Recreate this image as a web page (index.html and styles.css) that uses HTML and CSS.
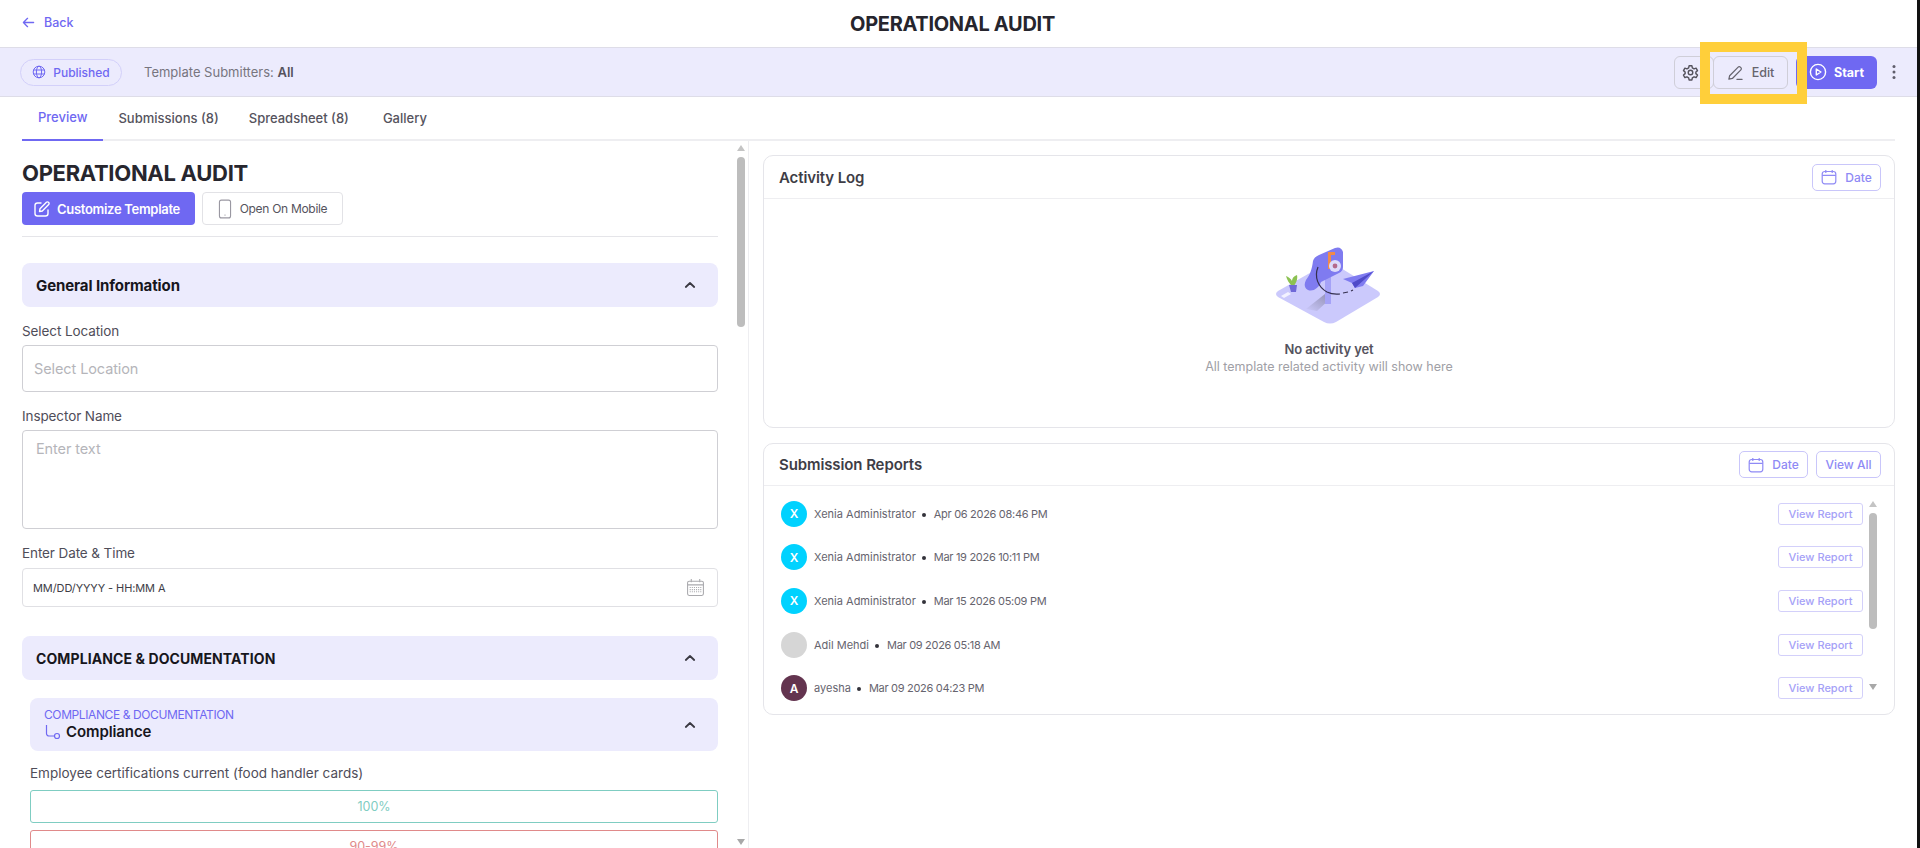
FILE: index.html
```html
<!DOCTYPE html>
<html lang="en">
<head>
  <meta charset="UTF-8">
  <title>Operational Audit</title>
  <link rel="stylesheet" href="styles.css">
</head>
<body>

<div class="page">
  <header class="topbar">
    <a class="back">
      <svg class="ico-back" viewBox="0 0 14 14" fill="none" stroke="currentColor" stroke-width="1.4" stroke-linecap="round" stroke-linejoin="round"><path d="M12.5 7H1.5M6 2.5 1.5 7 6 11.5"/></svg>
      Back
    </a>
    <h1 class="title">OPERATIONAL AUDIT</h1>
  </header>

  <div class="statusbar">
    <span class="pill">
      <svg class="ico-14" viewBox="0 0 14 14" fill="none" stroke="currentColor" stroke-width="1"><circle cx="7" cy="7" r="5.8"/><ellipse cx="7" cy="7" rx="2.6" ry="5.8"/><path d="M1.4 5h11.2M1.4 9h11.2"/></svg>
      Published
    </span>
    <span class="submitters">Template Submitters: <b>All</b></span>

    <div class="actions">
      <button class="btn-icon">
        <svg class="ico-gear" viewBox="0 0 24 24" fill="none" stroke="currentColor" stroke-width="2" stroke-linejoin="round"><circle cx="12" cy="12" r="3.2"/><path d="M10 2.5h4l.6 3 2.4 1.4 2.9-1 2 3.5-2.3 2v2.2l2.3 2-2 3.5-2.9-1-2.4 1.4-.6 3h-4l-.6-3-2.4-1.4-2.9 1-2-3.5 2.3-2v-2.2l-2.3-2 2-3.500 2.9 1L9.400 5.500z"/></svg>
      </button>
      <button class="btn-edit">
        <svg class="ico-17" viewBox="0 0 18 18" fill="none" stroke="currentColor" stroke-width="1.3" stroke-linecap="round" stroke-linejoin="round"><path d="M2 16l.8-3.600L11.800 3.300a1.600 1.600 0 0 1 2.300 0l.6.6a1.600 1.600 0 0 1 0 2.300l-9 9.100zM10.500 16.200h5.500"/></svg>
        Edit
      </button>
      <button class="btn-start">
        <svg class="ico-18" viewBox="0 0 18 18" fill="none" stroke="currentColor" stroke-width="1.4" stroke-linejoin="round"><circle cx="9" cy="9" r="7.6"/><path d="M7.300 6v6l4.600-3z"/></svg>
        Start
      </button>
      <svg class="ico-dots" viewBox="0 0 4 16" fill="#5f5d6b"><circle cx="2" cy="2.5" r="1.5"/><circle cx="2" cy="8" r="1.5"/><circle cx="2" cy="13.5" r="1.5"/></svg>
      <div class="highlight"></div>
    </div>
  </div>

  <nav class="tabs">
    <a class="tab active">Preview</a>
    <a class="tab">Submissions (8)</a>
    <a class="tab tab-sheet">Spreadsheet (8)</a>
    <a class="tab">Gallery</a>
  </nav>

  <main class="content">
    <section class="preview">
      <div class="preview-body">
        <h2 class="form-title">OPERATIONAL AUDIT</h2>
        <div class="form-actions">
          <button class="btn-customize">
            <svg class="ico-18" viewBox="0 0 18 18" fill="none" stroke="currentColor" stroke-width="1.4" stroke-linecap="round" stroke-linejoin="round"><path d="M8 3H4.500A2.500 2.500 0 0 0 2 5.500v8A2.500 2.500 0 0 0 4.500 16h8a2.500 2.500 0 0 0 2.500-2.500V10"/><path d="M6.500 11.500l.5-2.800 6.400-6.400a1.400 1.400 0 0 1 2 0l.3.300a1.400 1.400 0 0 1 0 2l-6.400 6.400z"/></svg>
            Customize Template
          </button>
          <button class="btn-mobile">
            <svg class="ico-phone" viewBox="0 0 12 18" fill="none" stroke="#9a98a2" stroke-width="1"><rect x="1" y="1" width="10" height="16" rx="1.8"/><path d="M5.600 14.500h.8"/></svg>
            Open On Mobile
          </button>
        </div>

        <div class="group-head first">
          <span>General Information</span>
          <svg class="chevron" viewBox="0 0 12 8" fill="none" stroke="currentColor" stroke-width="1.8" stroke-linecap="round" stroke-linejoin="round"><path d="M1.800 6 6 2l4.200 4"/></svg>
        </div>

        <label class="field-label">Select Location</label>
        <div class="input input-select">Select Location</div>

        <label class="field-label">Inspector Name</label>
        <div class="input input-area">Enter text</div>

        <label class="field-label">Enter Date &amp; Time</label>
        <div class="input input-date">
          <span>MM/DD/YYYY - HH:MM A</span>
          <svg class="ico-cal-grey" viewBox="0 0 18 18" fill="none" stroke="#a9a9ad" stroke-width="1"><rect x="1.5" y="3" width="15" height="13.5" rx="1.5"/><path d="M5 1v3M13 1v3M1.500 6.500h15"/><path stroke-dasharray="1 1" d="M3.500 9h11M3.500 11h11M3.500 13h11"/></svg>
        </div>

        <div class="group-head second">
          <span>COMPLIANCE &amp; DOCUMENTATION</span>
          <svg class="chevron" viewBox="0 0 12 8" fill="none" stroke="currentColor" stroke-width="1.8" stroke-linecap="round" stroke-linejoin="round"><path d="M1.800 6 6 2l4.200 4"/></svg>
        </div>

        <div class="nested">
          <div class="sub-head">
            <div>
              <div class="sub-parent">COMPLIANCE &amp; DOCUMENTATION</div>
              <div class="sub-name">
                <svg class="ico-branch" viewBox="0 0 18 16" fill="none" stroke="#6f68f2" stroke-width="1.2"><path d="M2.500 1v8.500a2.500 2.500 0 0 0 2.500 2.500h5"/><circle cx="13" cy="12" r="2.5"/></svg>
                Compliance
              </div>
            </div>
            <svg class="chevron" viewBox="0 0 12 8" fill="none" stroke="currentColor" stroke-width="1.8" stroke-linecap="round" stroke-linejoin="round"><path d="M1.800 6 6 2l4.200 4"/></svg>
          </div>
          <div class="question">Employee certifications current (food handler cards)</div>
          <div class="option good">100%</div>
          <div class="option bad">90-99%</div>
        </div>
      </div>

      <div class="scrollbar scrollbar-main">
        <i class="arrow-up"></i>
        <div class="thumb"></div>
        <i class="arrow-down"></i>
      </div>
    </section>

    <aside class="side">
      <section class="card card-activity">
        <div class="card-head">
          <h3>Activity Log</h3>
          <div class="card-tools">
            <button class="btn-outline">
              <svg class="ico-16" viewBox="0 0 16 16" fill="none" stroke="currentColor" stroke-width="1.2"><rect x="1.2" y="2.5" width="13.6" height="12.3" rx="2.5"/><path d="M1.200 6.300h13.600M4.800 1v3M11.200 1v3"/></svg>
              Date
            </button>
          </div>
        </div>
        <div class="empty">
          <svg class="empty-art" viewBox="0 0 108 80">
            <defs>
              <linearGradient id="post-shadow" x1="1" y1="0" x2="0" y2="1">
                <stop offset="0" stop-color="#77758f" stop-opacity=".7"/>
                <stop offset="1" stop-color="#77758f" stop-opacity="0"/>
              </linearGradient>
            </defs>
            <path d="M49 18Q55 15 61 18L103 44Q107 47 103 50L61 75Q55 78 49 75L3 50Q-1 47 3 44Z" fill="#cbc9fc"/>
            <path d="M50 47 56 51 42 64 31 62z" fill="url(#post-shadow)"/>
            <rect x="50" y="28" width="6" height="29" fill="#a5a2f7"/>
            <path d="M38 14Q39 10 44 8L60 1Q66-1 68 5V20Q68 24 64 26L46 35C44 41 38 45 33 43 29 41 29 37 31 33 35 28 37 22 38 14Z" fill="#7f7bf0"/>
            <path d="M53 5h7v3h-4v14h-3z" fill="#f08a4b"/>
            <circle cx="60" cy="19" r="6" fill="#dddcfb"/>
            <circle cx="60" cy="19" r="2.400" fill="#b46a8c"/>
            <path d="M43 20C39 30 43 40 52 45 57 47.500 61 47.500 65 47" fill="none" stroke="#35304f" stroke-width="1.2"/>
            <path d="M68 46l5-1M76 44l2-1" stroke="#35304f" stroke-width="1.2"/>
            <path d="M99 24 68 32 77 36 80 41 88 39z" fill="#7f7bf0"/>
            <path d="M99 24 77 36 80 41z" fill="#4f4ac8"/>
            <path d="M17 39C14 36 12 33 11 29 14 30 16 32 17 34 17 31 19 29 22 28 23 32 21 36 19 39z" fill="#8cc152"/>
            <path d="M14 38h8l-1 7h-5z" fill="#6f68d8"/>
            <path d="M6 49 13 45 16 47 9 51z" fill="#f3f2ff"/>
          </svg>
          <div class="empty-title">No activity yet</div>
          <div class="empty-text">All template related activity will show here</div>
        </div>
      </section>

      <section class="card card-reports">
        <div class="card-head">
          <h3>Submission Reports</h3>
          <div class="card-tools">
            <button class="btn-outline">
              <svg class="ico-16" viewBox="0 0 16 16" fill="none" stroke="currentColor" stroke-width="1.2"><rect x="1.2" y="2.5" width="13.6" height="12.3" rx="2.5"/><path d="M1.200 6.300h13.600M4.800 1v3M11.200 1v3"/></svg>
              Date
            </button>
            <button class="btn-outline btn-all">View All</button>
          </div>
        </div>
        <div class="reports">
          <ul class="report-list">
            <li class="report">
              <span class="avatar cyan">X</span>
              <span class="report-text">Xenia Administrator<i class="dot"></i><span class="report-date">Apr 06 2026 08:46 PM</span></span>
              <button class="btn-report">View Report</button>
            </li>
            <li class="report">
              <span class="avatar cyan">X</span>
              <span class="report-text">Xenia Administrator<i class="dot"></i><span class="report-date">Mar 19 2026 10:11 PM</span></span>
              <button class="btn-report">View Report</button>
            </li>
            <li class="report">
              <span class="avatar cyan">X</span>
              <span class="report-text">Xenia Administrator<i class="dot"></i><span class="report-date">Mar 15 2026 05:09 PM</span></span>
              <button class="btn-report">View Report</button>
            </li>
            <li class="report">
              <span class="avatar grey"></span>
              <span class="report-text">Adil Mehdi<i class="dot"></i><span class="report-date">Mar 09 2026 05:18 AM</span></span>
              <button class="btn-report">View Report</button>
            </li>
            <li class="report">
              <span class="avatar plum">A</span>
              <span class="report-text">ayesha<i class="dot"></i><span class="report-date">Mar 09 2026 04:23 PM</span></span>
              <button class="btn-report">View Report</button>
            </li>
          </ul>
          <div class="scrollbar scrollbar-reports">
            <i class="arrow-up"></i>
            <div class="thumb"></div>
            <i class="arrow-down"></i>
          </div>
        </div>
      </section>
    </aside>
  </main>
</div>

</body>
</html>
```

FILE: styles.css
```css
* {
  box-sizing: border-box;
}

html {
  background: #111;
}

body {
  margin: 0;
  font-family: Inter, "Noto Sans", Arial, sans-serif;
  color: #27262e;
}

button {
  font-family: inherit;
  cursor: pointer;
}

.page {
  width: 1917px;
  height: 848px;
  overflow: hidden;
  background: #fff;
}

/* top */
.topbar {
  height: 47px;
  position: relative;
  display: flex;
  align-items: center;
  justify-content: center;
  padding-right: 12px;
}

.back {
  position: absolute;
  left: 22px;
  top: 15px;
  display: flex;
  align-items: center;
  gap: 9px;
  color: #6f68f2;
  font-size: 12.5px;
  font-weight: 500;
}

.ico-back {
  width: 13px;
  height: 13px;
}

.title {
  margin: 0;
  font-size: 20px;
  font-weight: 700;
  letter-spacing: -0.3px;
  color: #26252d;
}

.statusbar {
  height: 50px;
  display: flex;
  align-items: center;
  padding-left: 20px;
  background: #ecebfd;
  border-top: 1px solid #dedde8;
  border-bottom: 1px solid #dedde8;
}

.pill {
  width: 102px;
  height: 27px;
  display: flex;
  align-items: center;
  justify-content: center;
  gap: 7px;
  border: 1px solid #d3d0fa;
  border-radius: 14px;
  color: #6f68f2;
  font-size: 12px;
  font-weight: 500;
}

.submitters {
  margin-left: 22px;
  font-size: 13px;
  color: #77757f;
}

.submitters b {
  font-weight: 600;
  color: #55535d;
}

.actions {
  position: relative;
  margin-left: auto;
  display: flex;
  align-items: center;
  height: 100%;
  padding-right: 21px;
}

.btn-icon {
  width: 40px;
  height: 33px;
  padding: 0 8px 0 0;
  display: flex;
  align-items: center;
  justify-content: center;
  background: transparent;
  border: 1px solid #cfced8;
  border-radius: 6px;
  color: #55535d;
}

.ico-gear {
  width: 17px;
  height: 17px;
}

.btn-edit {
  width: 75px;
  height: 33px;
  margin-left: -1px;
  display: flex;
  align-items: center;
  justify-content: center;
  gap: 8px;
  background: transparent;
  border: 1px solid #cfced8;
  border-radius: 6px;
  font-size: 12.5px;
  font-weight: 500;
  color: #66646e;
}

.btn-start {
  width: 81px;
  height: 33px;
  margin-left: 8px;
  display: flex;
  align-items: center;
  justify-content: center;
  gap: 7px;
  background: #6f68f2;
  border: 0;
  border-radius: 6px;
  font-size: 12.5px;
  font-weight: 700;
  color: #fff;
}

.ico-dots {
  width: 4px;
  height: 16px;
  margin-left: 15px;
}

/* marks the Edit button in the screenshot */
.highlight {
  position: absolute;
  left: 26px;
  top: -6px;
  width: 107px;
  height: 62px;
  border: 10px solid #ffcf3a;
}

.ico-14 {
  width: 14px;
  height: 14px;
}

.ico-16 {
  width: 16px;
  height: 16px;
}

.ico-17 {
  width: 17px;
  height: 17px;
}

.ico-18 {
  width: 18px;
  height: 18px;
}

/* tabs */
.tabs {
  height: 44px;
  margin: 0 22px;
  display: flex;
  border-bottom: 2px solid #eeeef1;
}

.tab {
  height: 44px;
  padding: 0 16px 2px;
  display: flex;
  align-items: center;
  font-size: 13px;
  font-weight: 500;
  color: #55535d;
}

.tab.active {
  color: #6f68f2;
  border-bottom: 2px solid #6f68f2;
}

.tab + .tab {
  padding: 0 15px 2px;
}

.tab + .tab-sheet {
  padding-right: 19px;
}

/* layout */
.content {
  display: flex;
  height: 707px;
}

.preview {
  width: 749px;
  flex-shrink: 0;
  display: flex;
  border-right: 1px solid #eeeef1;
}

.preview-body {
  width: 718px;
  flex-shrink: 0;
  padding-left: 22px;
  overflow: hidden;
}

.form-title {
  margin: 17px 0 4px;
  font-size: 22px;
  line-height: 30px;
  font-weight: 700;
  letter-spacing: -0.3px;
  color: #27262e;
}

.form-actions {
  display: flex;
  gap: 7px;
  padding-bottom: 11px;
  border-bottom: 1px solid #e5e5e9;
}

.btn-customize {
  width: 173px;
  height: 33px;
  padding: 0 4px 0 0;
  display: flex;
  align-items: center;
  justify-content: center;
  gap: 6px;
  background: #6f68f2;
  border: 0;
  border-radius: 4px;
  color: #fff;
  font-size: 13px;
  font-weight: 600;
  letter-spacing: -0.3px;
}

.btn-mobile {
  width: 141px;
  height: 33px;
  display: flex;
  align-items: center;
  justify-content: center;
  gap: 8px;
  background: #fff;
  border: 1px solid #e2e2e6;
  border-radius: 4px;
  color: #55535d;
  font-size: 12px;
  letter-spacing: -0.3px;
}

.ico-phone {
  width: 14px;
  height: 20px;
}

.group-head {
  height: 44px;
  display: flex;
  align-items: center;
  justify-content: space-between;
  padding: 0 22px 0 14px;
  background: #ecebfd;
  border-radius: 8px;
  font-size: 14px;
  font-weight: 700;
  color: #17161c;
}

.group-head.first {
  margin-top: 26px;
  font-size: 15px;
  letter-spacing: -0.1px;
}

.group-head.second {
  margin-top: 29px;
  letter-spacing: 0.1px;
}

.chevron {
  width: 12px;
  height: 8px;
  color: #3a3942;
}

.field-label {
  display: block;
  margin-top: 16px;
  margin-bottom: 6px;
  font-size: 13.5px;
  line-height: 16px;
  font-weight: 400;
  letter-spacing: -0.1px;
  color: #4f4d59;
}

.input {
  border: 1px solid #cfcfd4;
  border-radius: 4px;
  background: #fff;
  font-size: 14.5px;
  letter-spacing: -0.1px;
  color: #b5b5ba;
}

.input-select {
  height: 47px;
  padding: 0 11px;
  display: flex;
  align-items: center;
}

.input-area {
  height: 99px;
  padding: 9px 13px;
}

.input-date {
  height: 39px;
  margin-top: 7px;
  padding: 0 12px 0 10px;
  display: flex;
  align-items: center;
  justify-content: space-between;
  border-color: #e0e0e4;
  font-size: 11px;
  color: #3e3d46;
}

.ico-cal-grey {
  width: 19px;
  height: 19px;
}

.nested {
  padding-left: 8px;
}

.sub-head {
  height: 53px;
  margin-top: 18px;
  display: flex;
  align-items: center;
  justify-content: space-between;
  padding: 0 22px 0 14px;
  background: #ecebfd;
  border-radius: 8px;
}

.sub-parent {
  font-size: 12px;
  line-height: 14px;
  letter-spacing: -0.4px;
  color: #6f68f2;
}

.sub-name {
  display: flex;
  align-items: center;
  gap: 4px;
  font-size: 15px;
  line-height: 20px;
  font-weight: 600;
  letter-spacing: -0.1px;
  color: #17161c;
}

.ico-branch {
  width: 18px;
  height: 16px;
}

.question {
  margin-top: 14px;
  margin-bottom: 9px;
  font-size: 13.5px;
  line-height: 16px;
  color: #4f4d59;
}

.option {
  height: 33px;
  margin-bottom: 7px;
  display: flex;
  align-items: center;
  justify-content: center;
  border-radius: 3px;
  font-size: 12.5px;
}

.option.good {
  border: 1.5px solid #7fcdc2;
  color: #7fcdc2;
}

.option.bad {
  border: 1.5px solid #e08a8a;
  color: #e08a8a;
}

/* fake scrollbars, the screenshot has them always on */
.scrollbar {
  display: flex;
  flex-direction: column;
  align-items: center;
}

.scrollbar-main {
  width: 8px;
  margin-left: 19px;
  padding-top: 4px;
}

.scrollbar .thumb {
  width: 100%;
  background: #bdbdbd;
  border-radius: 4px;
}

.scrollbar-main .thumb {
  height: 170px;
  margin-top: 6px;
}

.arrow-up,
.arrow-down {
  width: 0;
  height: 0;
  border-left: 4px solid transparent;
  border-right: 4px solid transparent;
}

.arrow-up {
  border-bottom: 6px solid #c4c4c4;
}

.arrow-down {
  margin-top: auto;
  border-top: 6px solid #a8a8a8;
}

.scrollbar-main .arrow-down {
  margin-bottom: 3px;
}

/* right column */
.side {
  width: 1132px;
  margin-left: 14px;
  padding-top: 14px;
}

.card {
  border: 1px solid #e5e5ea;
  border-radius: 10px;
  background: #fff;
}

.card-activity {
  height: 273px;
}

.card-reports {
  height: 272px;
  margin-top: 15px;
}

.card-head {
  height: 43px;
  display: flex;
  align-items: center;
  justify-content: space-between;
  padding: 0 13px 0 15px;
  border-bottom: 1px solid #eeeef1;
}

.card-reports .card-head {
  height: 42px;
}

.card-head h3 {
  margin: 0;
  font-size: 15px;
  font-weight: 600;
  letter-spacing: -0.1px;
  color: #3e3d46;
}

.card-tools {
  display: flex;
  gap: 8px;
}

.btn-outline {
  width: 69px;
  height: 27px;
  display: flex;
  align-items: center;
  justify-content: center;
  gap: 8px;
  background: #fff;
  border: 1px solid #c9c6fa;
  border-radius: 5px;
  color: #8f8af5;
  font-size: 12px;
  font-weight: 500;
}

.btn-all {
  width: 65px;
}

.empty {
  padding-top: 48px;
  text-align: center;
}

.empty-art {
  display: block;
  width: 108px;
  height: 80px;
  margin: 0 auto 13px;
}

.empty-title {
  font-size: 13px;
  line-height: 18px;
  font-weight: 600;
  letter-spacing: -0.1px;
  color: #55535d;
}

.empty-text {
  font-size: 12.5px;
  line-height: 18px;
  color: #a0a0a6;
}

.reports {
  display: flex;
  padding: 6px 17px 0 17px;
}

.report-list {
  flex: 1;
  margin: 0;
  padding: 0;
  list-style: none;
}

.report {
  height: 43.6px;
  display: flex;
  align-items: center;
}

.avatar {
  width: 26px;
  height: 26px;
  flex-shrink: 0;
  display: flex;
  align-items: center;
  justify-content: center;
  border-radius: 50%;
  color: #fff;
  font-size: 12px;
  font-weight: 600;
}

.avatar.cyan {
  background: #00d2ff;
}

.avatar.grey {
  background: #d6d6d6;
}

.avatar.plum {
  background: #63344f;
}

.report-text {
  margin-left: 7px;
  font-size: 11px;
  color: #66646e;
}

.dot {
  display: inline-block;
  width: 4px;
  height: 4px;
  margin: 0 8px 1px 6px;
  border-radius: 50%;
  background: #33323a;
}

.report-date {
  letter-spacing: -0.3px;
}

.btn-report {
  width: 85px;
  height: 22px;
  margin-left: auto;
  background: #fff;
  border: 1px solid #d3d0fa;
  border-radius: 3px;
  color: #a5a1f7;
  font-size: 11px;
  font-weight: 500;
}

.scrollbar-reports {
  width: 8px;
  margin-left: 6px;
  height: 198px;
  padding-top: 9px;
}

.scrollbar-reports .thumb {
  height: 116px;
  margin-top: 6px;
}
```
